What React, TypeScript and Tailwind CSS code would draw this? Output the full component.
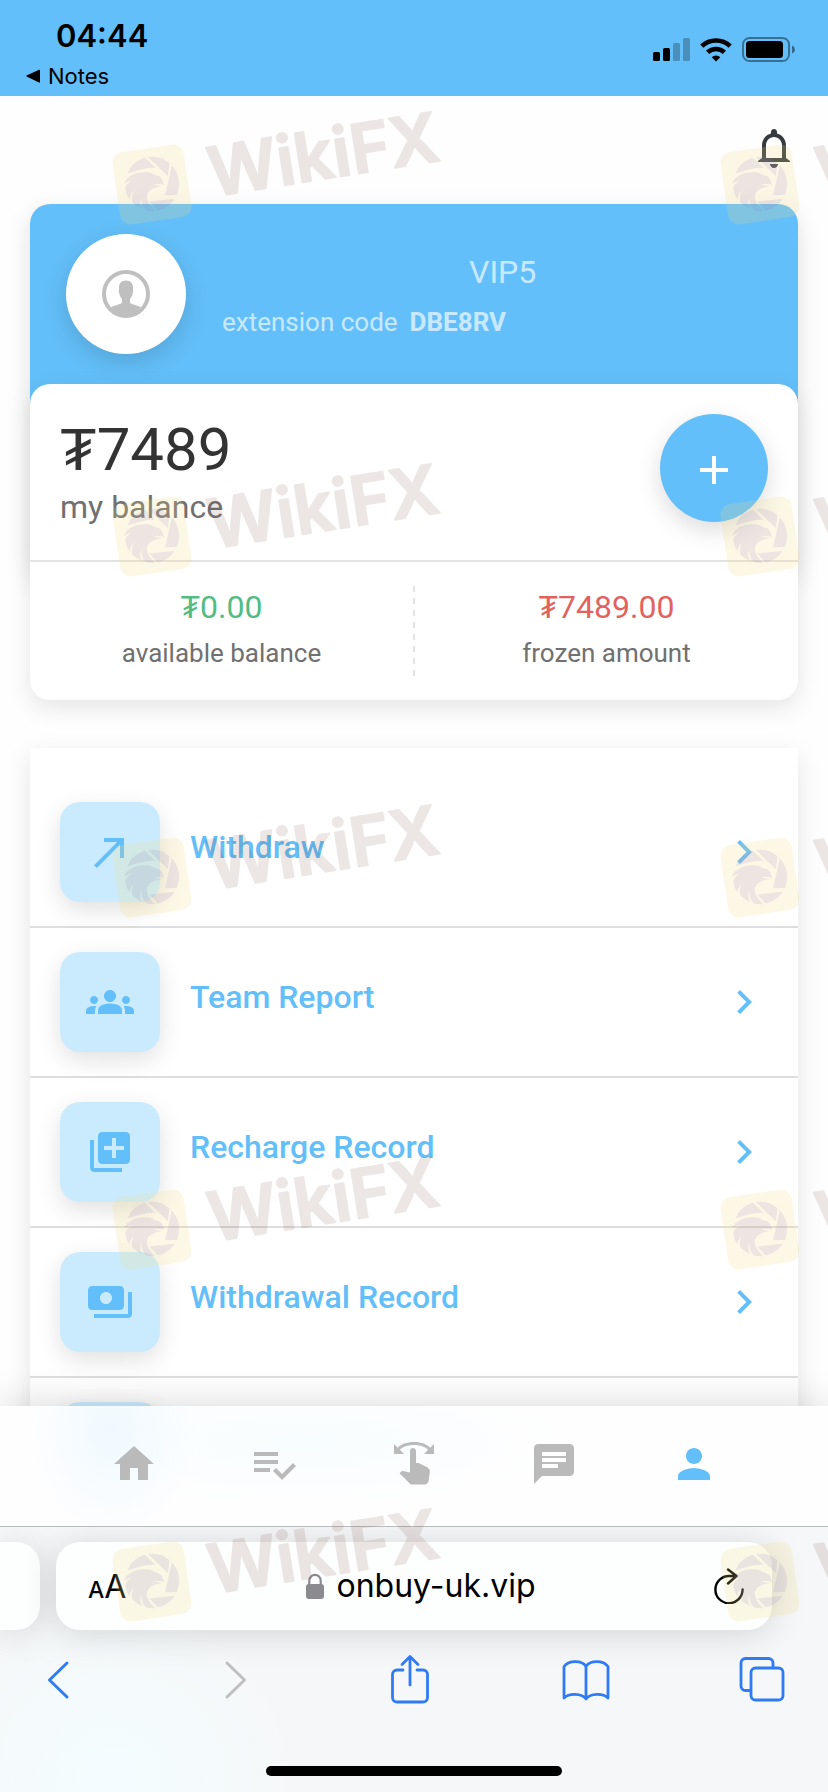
import React from "react";
import { MdAdd, MdCallMade, MdChat, MdChevronRight, MdGroups, MdHome, MdLibraryAdd, MdPayments, MdPerson } from "react-icons/md";

function StatusBar() {
  return (
    <header className="flex h-24 shrink-0 justify-between bg-[#63bff9] pr-8 pl-6 text-black">
      <div className="flex flex-col pt-4 font-[Inter,sans-serif]">
        <time className="pl-8 text-[31px] leading-10 font-semibold">04:44</time>
        <a href="#notes" className="flex items-center gap-2 text-[22px] leading-10">
          <svg className="h-4 w-4" viewBox="0 0 16 16" aria-hidden="true">
            <path d="M2.6 8.6 15 14.6q1 .4 1-.8V2.6q0-1.2-1-.8L2.6 7.6q-1 .5 0 1z" />
          </svg>
          Notes
        </a>
      </div>
      <div className="flex items-center gap-2.5 pt-1">
        <svg className="h-6 w-[37px]" viewBox="0 0 37 24" aria-hidden="true">
          <rect x="0" y="14" width="7" height="9" rx="1.5" />
          <rect x="10" y="10" width="7" height="13" rx="1.5" />
          <rect x="20" y="5" width="7" height="18" rx="1.5" fillOpacity=".25" />
          <rect x="30" y="0" width="7" height="23" rx="1.5" fillOpacity=".25" />
        </svg>
        <svg className="h-6 w-8" viewBox="0 0 32 24" aria-hidden="true" fill="none" stroke="#000">
          <path d="M1.8 8.2a20.5 20.5 0 0 1 28.4 0" strokeWidth="4.6" />
          <path d="M7.6 14.4a12.2 12.2 0 0 1 16.8 0" strokeWidth="4.6" />
          <path d="m16 23.5-4.3-4.3a6 6 0 0 1 8.6 0z" fill="#000" stroke="none" />
        </svg>
        <svg className="h-[26px] w-[54px]" viewBox="0 0 54 26" aria-hidden="true">
          <rect x="1" y="1" width="46" height="23" rx="6.5" fill="none" stroke="#000" strokeOpacity=".42" strokeWidth="2" />
          <rect x="4" y="4" width="37" height="17" rx="3.5" />
          <path d="M50 8.5c4 1.8 4 6.4 0 8z" fillOpacity=".45" />
        </svg>
      </div>
    </header>
  );
}

function BellIcon({ className }: { className?: string }) {
  return (
    <svg className={className} viewBox="0 0 48 48" aria-hidden="true">
      <path
        fill="currentColor"
        fillRule="evenodd"
        d="M24 5c1.7 0 3 1.3 3 3v1.6c5.2 1.3 9 6 9 11.9V34l4 3v1H8v-1l4-3V21.5c0-5.9 3.8-10.6 9-11.9V8c0-1.7 1.3-3 3-3zm0 8c-4.7 0-8 3.7-8 8.5V34h16V21.5c0-4.8-3.3-8.5-8-8.5zM20 40h8c0 2.200-1.8 4-4 4s-4-1.8-4-4z"
      />
    </svg>
  );
}

function Avatar() {
  return (
    <div className="flex size-[120px] shrink-0 items-center justify-center rounded-full bg-white shadow-[0_8px_24px_rgba(0,0,0,0.14)]">
      <svg className="size-12" viewBox="0 0 48 48" aria-hidden="true">
        <circle cx="24" cy="24" r="22" fill="none" stroke="#bfbfbf" strokeWidth="4" />
        <path
          fill="#bfbfbf"
          d="M24 10.5c4.4 0 7 2.8 7 7v3.2c.4.5.3 1.8-.4 2.8-.3 2.4-1.2 3.900-2.5 5.2v3.3c0 1 .4 1.4 1.3 1.7l9.6 3.3C35.5 42.5 30.5 46 24 46S12.5 42.5 9 37l9.6-3.3c.9-.3 1.3-.7 1.3-1.7v-3.3c-1.3-1.3-2.200-2.8-2.5-5.2-.7-1-.8-2.3-.4-2.8v-3.2c0-4.2 2.6-7 7-7z"
        />
      </svg>
    </div>
  );
}

function Amount({ value, label, tone }: { value: string; label: string; tone: string }) {
  return (
    <div className="flex flex-1 flex-col items-center pt-6">
      <span className={`text-[32px] leading-[42px] ${tone}`}>{value}</span>
      <span className="pt-2 text-[26px] leading-[34px] text-[#707070]">{label}</span>
    </div>
  );
}

function Account() {
  return (
    <section>
      <div className="flex h-[374px] items-start rounded-[20px] bg-[#63bff9] px-9 pt-[30px] shadow-[0_8px_24px_rgba(0,0,0,0.12)]">
        <Avatar />
        <div className="pt-4 pl-9 text-white/65">
          <div className="pl-[247px] text-[32px] leading-[44px]">VIP5</div>
          <div className="flex gap-3 pt-2 text-[26px] leading-[40px]">
            <span>extension code</span>
            <b className="font-bold">DBE8RV</b>
          </div>
        </div>
      </div>
      <div className="relative -mt-[194px] rounded-[20px] bg-white shadow-[0_8px_24px_rgba(0,0,0,0.1)]">
        <div className="flex h-[178px] items-start justify-between border-b-2 border-[#e3e3e3] px-[30px] pt-[30px]">
          <div>
            <div className="text-[60px] leading-[72px] text-[#333]">₮7489</div>
            <div className="text-[32px] leading-[42px] text-[#707070]">my balance</div>
          </div>
          <button
            aria-label="Add funds"
            className="flex size-[108px] items-center justify-center rounded-full bg-[#63bff9] pt-1 text-white shadow-[0_8px_24px_rgba(0,0,0,0.14)]"
          >
            <MdAdd className="size-12" />
          </button>
        </div>
        <div className="flex h-[138px]">
          <Amount value="₮0.00" label="available balance" tone="text-[#52bd83]" />
          <div className="my-6 w-0.5 bg-[repeating-linear-gradient(#e3e3e3_0_6px,transparent_6px_12px)]" />
          <Amount value="₮7489.00" label="frozen amount" tone="text-[#e2625e]" />
        </div>
      </div>
    </section>
  );
}

const entries = [
  { label: "Withdraw", Icon: MdCallMade },
  { label: "Team Report", Icon: MdGroups },
  { label: "Recharge Record", Icon: MdLibraryAdd },
  { label: "Withdrawal Record", Icon: MdPayments },
];

const tile =
  "flex size-[100px] shrink-0 items-center justify-center rounded-[20px] bg-[#caebfd] shadow-[0_8px_24px_rgba(0,0,0,0.12)]";

function Menu() {
  return (
    <ul className="mt-12 bg-white pt-[30px] text-[#63bff9] shadow-[0_8px_24px_rgba(0,0,0,0.1)]">
      {entries.map(({ label, Icon }) => (
        <li key={label} className="border-b-2 border-[#dedede]">
          <a href="#menu" className="flex items-center px-[30px] py-6">
            <span className={tile}>
              <Icon className="size-12" />
            </span>
            <span className="flex-1 pb-2.5 pl-[30px] text-[32px] leading-10 font-medium">{label}</span>
            <MdChevronRight className="size-12" />
          </a>
        </li>
      ))}
      <li className="px-[30px] py-6">
        <span className={tile} />
      </li>
    </ul>
  );
}

function ChecklistIcon({ className }: { className?: string }) {
  return (
    <svg className={className} viewBox="0 0 24 24" fill="currentColor" aria-hidden="true">
      <path d="M14 10H2v2h12v-2zm0-4H2v2h12V6zM2 16h8v-2H2v2zm19.5-4.5L23 13l-6.99 7-4.51-4.5L13 14l3.01 3 5.49-5.5z" />
    </svg>
  );
}

function SwipeIcon({ className }: { className?: string }) {
  return (
    <svg className={className} viewBox="0 0 24 24" fill="currentColor" aria-hidden="true">
      <path d="M18.89 13.75l-4.09-2.04c-.28-.14-.58-.21-.89-.21H13v-6C13 4.67 12.33 4 11.5 4S10 4.67 10 5.5v10.74l-3.44-.72c-.37-.08-.76.04-1.03.31l-.79.8 5.01 5.01c.38.38.88.59 1.41.59h6.16c1 0 1.84-.73 1.98-1.72l.63-4.46c.12-.85-.32-1.69-1.04-2z" />
      <path d="M20.13 3.87C18.69 2.17 15.6 1 12 1S5.31 2.17 3.87 3.87L2 2v5h5L4.93 4.93c1-1.29 3.7-2.43 7.07-2.43s6.07 1.14 7.07 2.43L17 7h5V2l-1.87 1.87z" />
    </svg>
  );
}

const tabs = [
  { label: "Home", Icon: MdHome, tone: "text-[#bababa]" },
  { label: "Tasks", Icon: ChecklistIcon, tone: "text-[#bababa]" },
  { label: "Grab", Icon: SwipeIcon, tone: "text-[#bababa]" },
  { label: "Chat", Icon: MdChat, tone: "text-[#bababa]" },
  { label: "Profile", Icon: MdPerson, tone: "text-[#63bff9]" },
];

function TabBar() {
  return (
    <nav className="relative flex h-[120px] shrink-0 justify-between bg-[#fefefe] bg-[radial-gradient(ellipse_84px_110px_at_112px_24px,#f0f9ff,#f0f9ff00),radial-gradient(ellipse_260px_60px_at_300px_36px,#f8fdff,#f8fdff00)] px-16 pt-[34px] shadow-[0_0_40px_rgba(0,0,0,0.16)]">
      {tabs.map(({ label, Icon, tone }) => (
        <button key={label} aria-label={label} className={`flex flex-1 items-start justify-center ${tone}`}>
          <Icon className="size-12" />
        </button>
      ))}
    </nav>
  );
}

const tool = "flex w-[52px] justify-center";

function BrowserBar() {
  return (
    <footer className="relative shrink-0 overflow-hidden border-t border-[#b9bcbc] bg-[#f6f7f8] bg-[radial-gradient(ellipse_190px_180px_at_110px_250px,#f3fdff,#f3fdff00)] font-[Inter,sans-serif]">
      <div className="flex gap-4 pt-[15px]">
        <div className="h-[88px] w-10 rounded-r-3xl bg-[#fdfefe] shadow-[0_4px_36px_rgba(0,0,0,0.14)]" />
        <div className="mr-14 flex h-[88px] flex-1 items-center justify-between rounded-3xl bg-[#fdfefe] pr-7 pl-8 shadow-[0_4px_36px_rgba(0,0,0,0.14)]">
          <button aria-label="Page settings" className="flex w-10 items-baseline pt-0.5 text-black">
            <span className="text-[23px] font-medium">A</span>
            <span className="text-[32px]">A</span>
          </button>
          <div className="flex items-center gap-3 text-[32px] text-black">
            <svg className="h-[26px] w-[18px]" viewBox="0 0 18 26" aria-hidden="true">
              <rect y="11" width="18" height="15" rx="3" fill="#8b8a90" />
              <path d="M3.3 12V7.5a5.7 5.7 0 0 1 11.4 0V12" fill="none" stroke="#8b8a90" strokeWidth="2.2" />
            </svg>
            onbuy-uk.vip
          </div>
          <button aria-label="Reload">
            <svg className="h-9 w-[30px]" viewBox="0 0 30 36" fill="none" stroke="#000" strokeWidth="2.4" strokeLinecap="round" strokeLinejoin="round" aria-hidden="true">
              <path d="M28.6 21.5A13.6 13.6 0 1 1 15 8H22M14 1.5 22.5 8 14 15.5" />
            </svg>
          </button>
        </div>
      </div>
      <div className="flex items-center justify-between pt-6 pr-10 pl-8 text-[#2f7bf6]">
        <button aria-label="Back" className={tool}>
          <svg className="h-[52px] w-[26px]" viewBox="0 0 26 52" fill="none" stroke="currentColor" strokeWidth="3" strokeLinecap="round" strokeLinejoin="round">
            <path d="M22 9 4.5 26 22 43" />
          </svg>
        </button>
        <button aria-label="Forward" className={`${tool} text-[#bfbfbf]`}>
          <svg className="h-[52px] w-[26px]" viewBox="0 0 26 52" fill="none" stroke="currentColor" strokeWidth="3" strokeLinecap="round" strokeLinejoin="round">
            <path d="M6 9 23.5 26 6 43" />
          </svg>
        </button>
        <button aria-label="Share" className={tool}>
          <svg className="h-[52px] w-10" viewBox="0 0 40 52" fill="none" stroke="currentColor" strokeWidth="2.8" strokeLinecap="round" strokeLinejoin="round">
            <path d="M13 16H7a4.5 4.5 0 0 0-4.5 4.5v23A4.5 4.5 0 0 0 7 48h26a4.5 4.5 0 0 0 4.5-4.5v-23A4.5 4.5 0 0 0 33 16h-6M20 31V3M12 10.5 20 2.5l8 8" />
          </svg>
        </button>
        <button aria-label="Bookmarks" className={tool}>
          <svg className="h-[52px] w-12" viewBox="0 0 48 52" fill="none" stroke="currentColor" strokeWidth="2.8" strokeLinejoin="round">
            <path d="M24 12.5C20 6 7 6 2 12.5V44c5-5 17.5-5 22 1 4.5-6 17-6 22-1V12.5C41 6 28 6 24 12.5zM24 12v33" />
          </svg>
        </button>
        <button aria-label="Tabs" className={tool}>
          <svg className="h-[52px] w-[46px]" viewBox="0 0 46 52" fill="none" stroke="currentColor" strokeWidth="2.8">
            <rect x="12" y="14" width="32" height="32" rx="4.5" />
            <path d="M34 14V9a4.5 4.5 0 0 0-4.5-4.5H6.5A4.5 4.5 0 0 0 2 9v23a4.5 4.5 0 0 0 4.5 4.5H12" />
          </svg>
        </button>
      </div>
      <div className="mx-auto mt-[60px] mb-4 h-2.5 w-[296px] rounded-full bg-black" />
    </footer>
  );
}

function Brand({ className }: { className: string }) {
  return (
    <svg className={`absolute h-40 w-[350px] ${className}`} viewBox="0 0 350 160">
      <g transform="rotate(-8.5 42 94)">
        <rect x="6" y="57" width="72" height="73" rx="11" fill="#f7dc80" fillOpacity=".2" />
        <g transform="translate(42 93)" fill="#8a78c8" fillOpacity=".15">
          <path d="M-19.5-18.5A27 27 0 0 1-3-27L6-15.5C-3-17.5-11-16-22.5-14z" />
          <path d="M0-27.2A27 27 0 0 1 20.5-18L17-5.5z" />
          <path d="M22.5-15.5A27 27 0 0 1 23 14.5L11.5 13z" />
          <path d="M-5 17 20.5 18A27 27 0 0 1 2 27z" />
          <path d="M-26-7C-20-14-8-14 0-11.5c2.5.7 3 2.5 5 3.5C10-6.500 12-3 11.5 3 9 .5 5 1 1 .5c3 2 6 1.5 8 3C-3 3-9 9-6.5 17c1 4 3 7 6 10.2A27 27 0 0 1-9 25.5C-13 21-13 17-12.5 12c-2.5 4-2.5 8-.8 11.5A27 27 0 0 1-22 15.5c-.5-5 1-9 4-12-4 2.5-6 5.5-6.500 9A27 27 0 0 1-27 0c2-4 5-5.5 8.5-6.500-3.5-.2-6 .8-8.5 2.5z" />
        </g>
      </g>
      <text
        transform="rotate(-9 100 106)"
        x="102"
        y="106"
        fill="#6a3a2c"
        stroke="#6a3a2c"
        strokeWidth="2"
        strokeLinejoin="round"
        opacity=".12"
        className="font-[Inter,sans-serif] text-[68px] font-semibold"
      >
        WikiFX
      </text>
    </svg>
  );
}

const bands = ["top-[91px]", "top-[443px]", "top-[784px]", "top-[1136px]", "top-[1488px]"];

export default function App() {
  return (
    <div className="relative flex h-screen flex-col overflow-hidden bg-[#fefefe] font-[Roboto,sans-serif]">
      <StatusBar />
      <main className="min-h-0 flex-1 overflow-hidden px-[30px]">
        <div className="flex h-[108px] items-center justify-end pb-1">
          <button aria-label="Notifications" className="text-[#343a40]">
            <BellIcon className="size-12" />
          </button>
        </div>
        <Account />
        <Menu />
      </main>
      <TabBar />
      <BrowserBar />
      <div className="pointer-events-none absolute inset-0 overflow-hidden" aria-hidden="true">
        {bands.map((band) => (
          <React.Fragment key={band}>
            <Brand className={`left-[110px] ${band}`} />
            <Brand className={`left-[718px] ${band}`} />
          </React.Fragment>
        ))}
      </div>
    </div>
  );
}
